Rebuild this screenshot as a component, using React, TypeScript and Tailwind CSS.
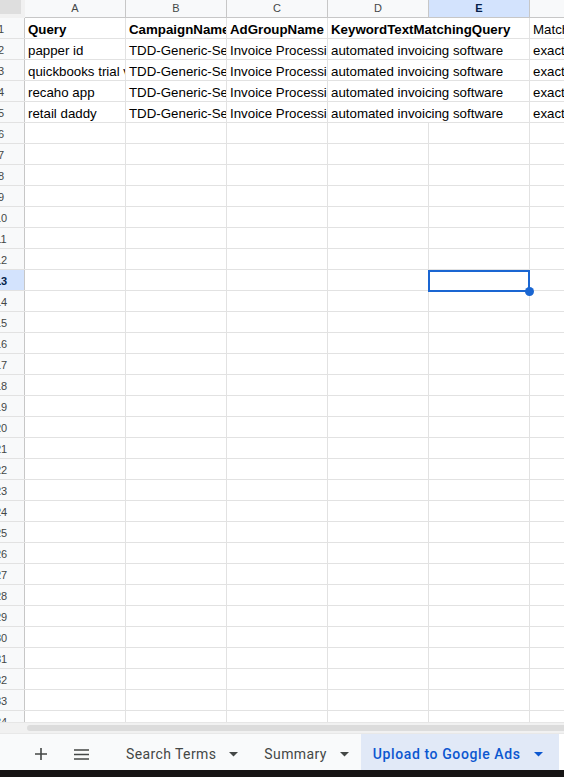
import React from 'react';

const COLS = ['A', 'B', 'C', 'D', 'E', 'F'];
const ACTIVE_COL = 4;
const ACTIVE_ROW = 13;
const ROW_COUNT = 34;

const DATA: string[][] = [
  ['Query', 'CampaignName', 'AdGroupName', 'KeywordTextMatchingQuery', '', 'MatchType'],
  ['papper id', 'TDD-Generic-Search', 'Invoice Processing', 'automated invoicing software', '', 'exact'],
  ['quickbooks trial version', 'TDD-Generic-Search', 'Invoice Processing', 'automated invoicing software', '', 'exact'],
  ['recaho app', 'TDD-Generic-Search', 'Invoice Processing', 'automated invoicing software', '', 'exact'],
  ['retail daddy', 'TDD-Generic-Search', 'Invoice Processing', 'automated invoicing software', '', 'exact'],
];

function Caret({ className = '' }: { className?: string }) {
  return (
    <svg width="9" height="5" viewBox="0 0 9 5" className={className}>
      <path d="M0 0h9L4.5 4.5z" fill="currentColor" />
    </svg>
  );
}

function Cell({ value, bold, spill }: { value: string; bold: boolean; spill: boolean }) {
  return (
    <div
      className={`w-[101px] shrink-0 h-full flex items-center pt-[3px] px-[3px] whitespace-nowrap ${
        spill ? 'overflow-visible relative z-10' : 'overflow-hidden border-r border-[#e2e2e2]'
      } ${bold ? 'font-bold' : ''}`}
    >
      {value}
    </div>
  );
}

function Grid() {
  return (
    <div className="relative h-[722px] overflow-hidden bg-white">
      <div className="-ml-[22px] -mt-[3px] w-[700px]">
        {/* column letters */}
        <div className="flex h-[21px]">
          <div className="w-[47px] shrink-0 bg-[#dedede] border-r-[4px] border-b-[4px] border-[#f1f1f1]" />
          {COLS.map((c, i) => (
            <div
              key={c}
              className={`w-[101px] shrink-0 flex items-center justify-center pt-[2px] border-r border-b border-[#c7c7c7] text-[11px] ${
                i === ACTIVE_COL ? 'bg-[#d3e3fd] font-bold text-[#041e49]' : 'bg-[#f8f9fa] text-[#444746]'
              }`}
            >
              {c}
            </div>
          ))}
        </div>

        {Array.from({ length: ROW_COUNT }, (_, r) => {
          const n = r + 1;
          const row = DATA[r];
          return (
            <div key={n} className="flex h-[21px] border-b border-[#e2e2e2] text-[13.3px] text-black">
              <div
                className={`w-[47px] shrink-0 flex items-center justify-center pt-[3px] border-r border-[#c7c7c7] text-[11px] ${
                  n === ACTIVE_ROW ? 'bg-[#d3e3fd] font-bold text-[#041e49]' : 'bg-[#f8f9fa] text-[#444746]'
                }`}
              >
                {n}
              </div>
              {COLS.map((c, i) => (
                <Cell key={c} value={row ? row[i] : ''} bold={n === 1 && i < 4} spill={!!row && i === 3} />
              ))}
            </div>
          );
        })}
      </div>

      {/* selected cell E13 */}
      <div className="absolute left-[428px] top-[270px] w-[102px] h-[22px] border-2 border-[#1a66d2] pointer-events-none" />
      <div className="absolute left-[525px] top-[287px] w-[9px] h-[9px] rounded-full bg-[#1a66d2]" />
    </div>
  );
}

function ScrollBar() {
  return (
    <div className="h-[12px] bg-[#f1f1f1] border-t border-[#e6e6e6] border-b border-b-[#e8e8e8] pl-[27px] py-[2px]">
      <div className="h-full rounded-l-full bg-[#dcdcdc]" />
    </div>
  );
}

function SheetTab({ label, active }: { label: string; active?: boolean }) {
  return (
    <div
      className={`h-full shrink-0 flex items-center gap-[13px] pt-[4px] px-[12px] text-[14px] whitespace-nowrap ${
        active
          ? 'bg-[#e1e9f7] text-[#0b57d0] font-medium tracking-[0.6px] w-[198px]'
          : 'text-[#444746] tracking-[0.4px]'
      }`}
    >
      <span>{label}</span>
      <Caret className="mt-[1px] shrink-0" />
    </div>
  );
}

function TabBar() {
  return (
    <div className="h-[36px] flex items-stretch bg-[#f9fafb] font-['Roboto',sans-serif]">
      <div className="w-[74px] shrink-0 flex items-center pt-[4px] pl-[35px] text-[#444746]">
        <svg width="12" height="12" viewBox="0 0 12 12">
          <path d="M6 0v12M0 6h12" stroke="currentColor" strokeWidth="1.6" />
        </svg>
      </div>
      <div className="w-[40px] shrink-0 flex items-center pt-[4px] text-[#444746]">
        <svg width="15" height="11" viewBox="0 0 15 11">
          <path d="M0 1h15M0 5.5h15M0 10h15" stroke="currentColor" strokeWidth="1.4" />
        </svg>
      </div>
      <SheetTab label="Search Terms" />
      <div className="w-[2px] shrink-0" />
      <SheetTab label="Summary" />
      <SheetTab label="Upload to Google Ads" active />
      <div className="flex-1 bg-white" />
    </div>
  );
}

export default function App() {
  return (
    <div className="w-[564px] h-[777px] overflow-hidden bg-white font-['Liberation_Sans',Arial,sans-serif]">
      <Grid />
      <ScrollBar />
      <TabBar />
      <div className="h-[7px] bg-[#161414]" />
    </div>
  );
}
